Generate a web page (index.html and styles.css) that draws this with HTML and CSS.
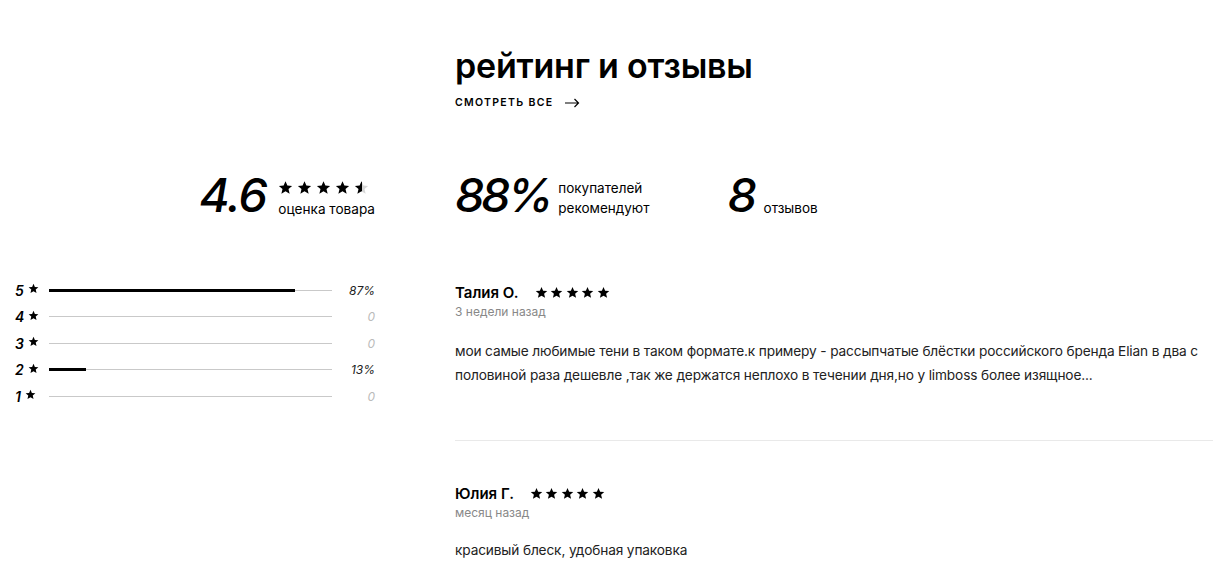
FILE: index.html
```html
<!DOCTYPE html>
<html lang="ru">
<head>
    <meta charset="UTF-8">
    <title>Рейтинг и отзывы</title>
    <link rel="stylesheet" href="styles.css">
</head>
<body>
    <svg width="0" height="0" class="sprite">
        <defs>
            <symbol id="star" viewBox="0 0 24 24">
                <path d="M12 1.8l3 7 7.6.6-5.8 5 1.8 7.4L12 17.9 5.4 21.8l1.8-7.4-5.8-5 7.6-.6z"/>
            </symbol>
            <linearGradient id="half">
                <stop offset="50%" stop-color="#000"/>
                <stop offset="50%" stop-color="#d6d6d6"/>
            </linearGradient>
        </defs>
    </svg>

    <section class="reviews">
        <div></div>
        <div class="head">
            <h2>рейтинг и отзывы</h2>
            <a href="#" class="see-all">смотреть все
                <svg width="15" height="10" viewBox="0 0 15 10"><path d="M0 5h13.5M9.5 1l4 4-4 4" fill="none" stroke="#000" stroke-width="1.2"/></svg>
            </a>
        </div>

        <div class="score">
            <span class="big">4.6</span>
            <div class="score-side">
                <div class="stars small">
                    <svg><use href="#star"/></svg>
                    <svg><use href="#star"/></svg>
                    <svg><use href="#star"/></svg>
                    <svg><use href="#star"/></svg>
                    <svg fill="url(#half)"><use href="#star"/></svg>
                </div>
                <span>оценка товара</span>
            </div>
        </div>
        <div class="stats">
            <div class="stat">
                <span class="big tight">88%</span>
                <span class="stat-text">покупателей<br>рекомендуют</span>
            </div>
            <div class="stat">
                <span class="big">8</span>
                <span class="stat-text">отзывов</span>
            </div>
        </div>

        <div class="bars">
            <div class="bar-row">
                <span class="bar-label">5 <svg><use href="#star"/></svg></span>
                <div class="bar"><div class="fill" style="width: 87%"></div></div>
                <span class="bar-pct">87%</span>
            </div>
            <div class="bar-row">
                <span class="bar-label">4 <svg><use href="#star"/></svg></span>
                <div class="bar"></div>
                <span class="bar-pct zero">0</span>
            </div>
            <div class="bar-row">
                <span class="bar-label">3 <svg><use href="#star"/></svg></span>
                <div class="bar"></div>
                <span class="bar-pct zero">0</span>
            </div>
            <div class="bar-row">
                <span class="bar-label">2 <svg><use href="#star"/></svg></span>
                <div class="bar"><div class="fill" style="width: 13%"></div></div>
                <span class="bar-pct">13%</span>
            </div>
            <div class="bar-row">
                <span class="bar-label">1 <svg><use href="#star"/></svg></span>
                <div class="bar"></div>
                <span class="bar-pct zero">0</span>
            </div>
        </div>

        <div class="list">
            <div class="review">
                <div class="review-top">
                    <span class="author">Талия О.</span>
                    <div class="stars">
                        <svg><use href="#star"/></svg>
                        <svg><use href="#star"/></svg>
                        <svg><use href="#star"/></svg>
                        <svg><use href="#star"/></svg>
                        <svg><use href="#star"/></svg>
                    </div>
                </div>
                <div class="date">3 недели назад</div>
                <p class="text">мои самые любимые тени в таком формате.к примеру - рассыпчатые блёстки российского бренда Elian в два с половиной раза дешевле ,так же держатся неплохо в течении дня,но у limboss более изящное...</p>
            </div>
            <div class="review">
                <div class="review-top">
                    <span class="author">Юлия Г.</span>
                    <div class="stars">
                        <svg><use href="#star"/></svg>
                        <svg><use href="#star"/></svg>
                        <svg><use href="#star"/></svg>
                        <svg><use href="#star"/></svg>
                        <svg><use href="#star"/></svg>
                    </div>
                </div>
                <div class="date">месяц назад</div>
                <p class="text">красивый блеск, удобная упаковка</p>
            </div>
        </div>
    </section>
</body>
</html>
```

FILE: styles.css
```css
* {
    margin: 0;
    padding: 0;
    box-sizing: border-box;
}

body {
    font-family: Inter, "Noto Sans", sans-serif;
    color: #000;
    background: #fff;
}

.sprite {
    position: absolute;
}

.reviews {
    display: grid;
    grid-template-columns: 375px 1fr;
    column-gap: 80px;
    padding: 46px 14px 0 0;
}

/* heading */
.head h2 {
    font-size: 34px;
    font-weight: 600;
    letter-spacing: -0.2px;
    line-height: 40px;
}

.see-all {
    display: inline-flex;
    align-items: center;
    gap: 12px;
    margin-top: 10px;
    font-size: 10.5px;
    font-weight: 600;
    letter-spacing: 1.3px;
    text-transform: uppercase;
    color: #000;
    text-decoration: none;
}

/* summary numbers */
.score,
.stats {
    margin-top: 61px;
}

.score {
    display: flex;
    justify-content: flex-end;
    align-items: flex-end;
    gap: 12px;
}

.big {
    font-size: 47px;
    font-weight: 500;
    font-style: italic;
    line-height: 48px;
    letter-spacing: -1.5px;
}

.big.tight {
    letter-spacing: -3.5px;
}

.score-side {
    display: flex;
    flex-direction: column;
    gap: 3px;
    font-size: 13.6px;
    line-height: 18px;
    padding-bottom: 1px;
}

.stats {
    display: flex;
    gap: 78px;
}

.stat {
    display: flex;
    align-items: flex-end;
    gap: 8px;
}

.stat-text {
    font-size: 13.5px;
    line-height: 20px;
    padding-bottom: 1px;
}

.stars {
    display: flex;
    gap: 2.5px;
}

.stars svg {
    width: 13px;
    height: 13px;
}

.stars.small {
    gap: 4px;
    margin-bottom: 2px;
}

.stars.small svg {
    width: 15px;
    height: 15px;
}

/* rating bars */
.bars {
    margin-top: 58px;
    padding-left: 15px;
}

.bar-row {
    display: flex;
    align-items: center;
    height: 26.5px;
}

.bar-label {
    display: flex;
    align-items: center;
    gap: 4px;
    width: 34px;
    font-size: 14px;
    font-weight: 600;
    font-style: italic;
}

.bar-label svg {
    width: 11px;
    height: 11px;
    margin-top: -3px;
}

.bar {
    flex: 1;
    height: 3px;
    background: linear-gradient(#fff 1px, #c9c9c9 1px, #c9c9c9 2px, #fff 2px);
}

.fill {
    height: 3px;
    background: #000;
}

.bar-pct {
    width: 43px;
    text-align: right;
    font-size: 12px;
    font-style: italic;
    color: #222;
}

.bar-pct.zero {
    color: #bbb;
}

/* review list */
.list {
    margin-top: 63px;
}

.review {
    padding-bottom: 53px;
}

.review + .review {
    border-top: 1px solid #e9e9e9;
    padding-top: 42px;
}

.review-top {
    display: flex;
    align-items: center;
    gap: 16px;
    height: 20px;
}

.author {
    font-size: 15px;
    font-weight: 600;
}

.date {
    margin-top: 1px;
    font-size: 12px;
    line-height: 18px;
    color: #888;
}

.text {
    margin-top: 18px;
    font-size: 13.7px;
    letter-spacing: -0.15px;
    line-height: 24px;
    color: #222;
}

.review + .review .text {
    margin-top: 16px;
}
```
